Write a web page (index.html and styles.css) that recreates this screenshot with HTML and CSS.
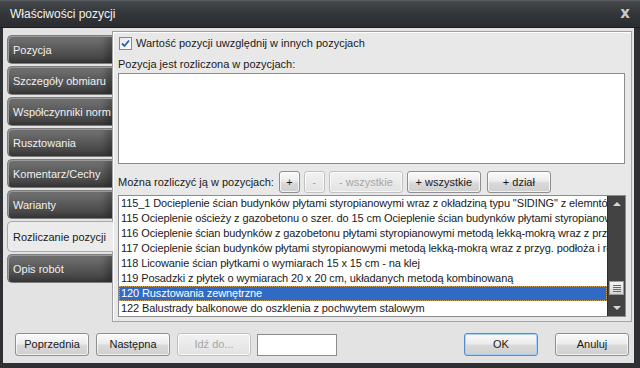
FILE: index.html
```html
<!DOCTYPE html>
<html>
  <head>
    <meta charset="UTF-8" />
    <title>Właściwości pozycji</title>
    <link rel="stylesheet" href="styles.css">
  </head>
  <body>
    <div class="window">
      <div class="titlebar">
        <span class="title">Właściwości pozycji</span>
        <span class="close">x</span>
      </div>

      <div class="frame">
        <div class="main">
          <div class="tabs">
            <div class="tab">Pozycja</div>
            <div class="tab">Szczegóły obmiaru</div>
            <div class="tab">Współczynniki norm</div>
            <div class="tab">Rusztowania</div>
            <div class="tab">Komentarz/Cechy</div>
            <div class="tab">Warianty</div>
            <div class="tab active">Rozliczanie pozycji</div>
            <div class="tab">Opis robót</div>
          </div>

          <div class="panel">
            <label class="check_row">
              <span class="checkbox">
                <svg width="9" height="9" viewBox="0 0 9 9">
                  <path d="M1 4.5 L3.5 7 L8 1.5" fill="none" stroke="#2a5ea8" stroke-width="1.8" />
                </svg>
              </span>
              Wartość pozycji uwzględnij w innych pozycjach
            </label>

            <div class="label">Pozycja jest rozliczona w pozycjach:</div>
            <div class="memo"></div>

            <div class="toolbar">
              <span class="label">Można rozliczyć ją w pozycjach:</span>
              <button class="button small">+</button>
              <button class="button small" disabled>-</button>
              <button class="button wide" disabled>- wszystkie</button>
              <button class="button wide">+ wszystkie</button>
              <button class="button dzial">+ dział</button>
            </div>

            <div class="listbox">
              <ul class="items">
                <li>115_1 Docieplenie ścian budynków płytami styropianowymi wraz z okładziną typu "SIDING" z elemntów PCV</li>
                <li>115 Ocieplenie ościeży z gazobetonu o szer. do 15 cm Ocieplenie ścian budynków płytami styropianowymi</li>
                <li>116 Ocieplenie ścian budynków z gazobetonu płytami styropianowymi metodą lekką-mokrą wraz z przyg. podłoża</li>
                <li>117 Ocieplenie ścian budynków płytami styropianowymi metodą lekką-mokrą wraz z przyg. podłoża i robót</li>
                <li>118 Licowanie ścian płytkami o wymiarach 15 x 15 cm - na klej</li>
                <li>119 Posadzki z płytek o wymiarach 20 x 20 cm, układanych metodą kombinowaną</li>
                <li class="selected">120 Rusztowania zewnętrzne</li>
                <li>122 Balustrady balkonowe do oszklenia z pochwytem stalowym</li>
              </ul>
              <div class="scrollbar">
                <div class="arrow up"></div>
                <div class="track">
                  <div class="thumb">
                    <span></span>
                    <span></span>
                    <span></span>
                    <span></span>
                  </div>
                </div>
                <div class="arrow down"></div>
              </div>
            </div>
          </div>
        </div>

        <div class="footer">
          <button class="button nav">Poprzednia</button>
          <button class="button nav">Następna</button>
          <button class="button nav" disabled>Idź do...</button>
          <input class="goto" type="text" />
          <div class="spacer"></div>
          <button class="button nav default">OK</button>
          <button class="button nav">Anuluj</button>
        </div>
        <div class="grip"></div>
      </div>
    </div>
  </body>
</html>
```

FILE: styles.css
```css
/* Window frame */
body {
  margin: 0;
  background-color: #2a2b2d;
  font-family: "Liberation Sans", Arial, sans-serif;
  font-size: 11px;
  color: #1a1a1a;
}
.window {
  width: 640px;
  height: 368px;
  display: flex;
  flex-direction: column;
  background-color: #2e3033;
}
.titlebar {
  height: 28px;
  box-sizing: border-box;
  border-top: 1px solid #5a5d61;
  border-bottom: 1px solid #1c1d1f;
  background: linear-gradient(to bottom, #45484c, #34373a 45%, #2b2d30);
  display: flex;
  align-items: center;
  justify-content: space-between;
  padding: 0 10px 0 10px;
}
.title {
  color: #f2f2f2;
  font-size: 12px;
}
.close {
  color: #c8cbcf;
  font-weight: bold;
  font-size: 15px;
  font-family: "DejaVu Sans", sans-serif;
  margin-top: -2px;
}
.frame {
  flex: 1;
  margin: 0 6px 5px 3px;
  background-color: #e3e3e3;
  display: flex;
  flex-direction: column;
  position: relative;
}
.main {
  display: flex;
  padding-top: 3px;
}

/* Vertical tabs */
.tabs {
  width: 105px;
  margin-left: 4px;
  padding-top: 4px;
  display: flex;
  flex-direction: column;
  gap: 2px;
}
.tab {
  height: 29px;
  box-sizing: border-box;
  display: flex;
  align-items: center;
  padding-left: 5px;
  color: #f0f0f0;
  white-space: nowrap;
  overflow: hidden;
  border: 1px solid #7c7c7c;
  border-right: none;
  border-radius: 5px 0 0 5px;
  background: linear-gradient(to bottom, #7a7a7a 0%, #606060 35%, #4a4a4a 75%, #3a3a3a 100%);
  box-shadow: inset 1px 1px 0 #9a9a9a, inset -6px 0 6px rgba(0, 0, 0, 0.25);
}
.tab.active {
  height: 31px;
  color: #1a1a1a;
  background: #ebebeb;
  border-color: #a8a8a8;
  box-shadow: none;
  margin-right: -1px;
  position: relative;
  z-index: 1;
}

/* Right panel */
.panel {
  width: 520px;
  height: 291px;
  box-sizing: border-box;
  background-color: #e8e8e8;
  border: 1px solid #a3a3a3;
  box-shadow: inset 1px 1px 0 #ffffff;
  padding: 4px 5px 4px 5px;
  display: flex;
  flex-direction: column;
}
.check_row {
  display: flex;
  align-items: center;
  gap: 4px;
  height: 14px;
  margin-left: 1px;
}
.checkbox {
  width: 11px;
  height: 11px;
  border: 1px solid #7a8aa0;
  background: linear-gradient(to bottom right, #e4e8ee, #ffffff);
  display: flex;
  align-items: center;
  justify-content: center;
}
.label {
  display: block;
  margin-top: 8px;
}
.memo {
  height: 89px;
  margin-top: 3px;
  margin-right: 1px;
  background-color: #fff;
  border: 1px solid #8c8c8c;
}

.toolbar {
  display: flex;
  align-items: center;
  margin-top: 7px;
  gap: 4px;
}
.toolbar .label {
  margin-top: 0;
  margin-right: 1px;
}

/* Buttons */
.button {
  font-family: "Liberation Sans", Arial, sans-serif;
  font-size: 11px;
  color: #1a1a1a;
  height: 22px;
  padding: 0;
  border: 1px solid #8f8f8f;
  border-radius: 3px;
  background: linear-gradient(to bottom, #fbfbfb 0%, #ececec 45%, #d9d9d9 55%, #cfcfcf 100%);
  box-shadow: inset 0 0 0 1px rgba(255, 255, 255, 0.7);
}
.button:disabled {
  color: #a6a6a6;
  border-color: #c2c2c2;
  background: linear-gradient(to bottom, #f2f2f2, #e2e2e2);
}
.button.small {
  width: 21px;
}
.button.wide {
  width: 74px;
}
.button.dzial {
  width: 64px;
  margin-left: 2px;
}
.button.nav {
  width: 74px;
  height: 23px;
}
.button.default {
  border-color: #5a8cc4;
  box-shadow: inset 0 0 0 1px #a9d0f5;
}

/* List */
.listbox {
  margin-top: 2px;
  height: 122px;
  box-sizing: border-box;
  border: 1px solid #8c8c8c;
  background-color: #fff;
  display: flex;
}
.items {
  list-style: none;
  margin: 0;
  padding: 0;
  flex: 1;
  overflow: hidden;
}
.items li {
  height: 15px;
  line-height: 15px;
  padding-left: 2px;
  white-space: nowrap;
  overflow: hidden;
  letter-spacing: -0.1px;
}
.items li.selected {
  background-color: #316ac5;
  color: #fff;
  outline: 1px dotted #c9a060;
  outline-offset: -1px;
}
.scrollbar {
  width: 17px;
  background-color: #434343;
  border-left: 1px solid #2e2e2e;
  display: flex;
  flex-direction: column;
}
.arrow {
  height: 16px;
  display: flex;
  align-items: center;
  justify-content: center;
}
.arrow::before {
  content: "";
  border-left: 4px solid transparent;
  border-right: 4px solid transparent;
}
.arrow.up::before {
  border-bottom: 4px solid #d8d8d8;
}
.arrow.down::before {
  border-top: 4px solid #d8d8d8;
}
.track {
  flex: 1;
  display: flex;
  flex-direction: column;
  justify-content: flex-end;
  padding-bottom: 5px;
}
.thumb {
  height: 12px;
  margin: 0 1px;
  background: linear-gradient(to bottom, #f4f4f4, #d4d4d4);
  border: 1px solid #9a9a9a;
  display: flex;
  flex-direction: column;
  align-items: center;
  justify-content: center;
  gap: 1px;
}
.thumb span {
  display: block;
  width: 8px;
  height: 1px;
  background-color: #6a6a6a;
}

/* Footer */
.footer {
  display: flex;
  align-items: center;
  padding: 10px 5px 0 12px;
  gap: 7px;
}
.goto {
  width: 80px;
  height: 22px;
  box-sizing: border-box;
  border: 1px solid #8c8c8c;
  margin-left: -1px;
  margin-top: 2px;
}
.spacer {
  flex: 1;
}
.footer .default {
  margin-right: 10px;
}
.grip {
  position: absolute;
  right: 0;
  bottom: 0;
  width: 6px;
  height: 6px;
  background-image: radial-gradient(#1e1e1e 40%, transparent 45%);
  background-size: 2px 2px;
}
```
